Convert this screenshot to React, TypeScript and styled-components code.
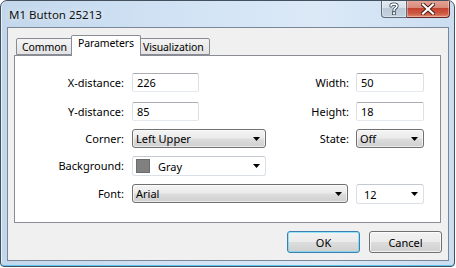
import styled, { createGlobalStyle } from 'styled-components'

const GlobalStyle = createGlobalStyle`
  html, body {
    margin: 0;
    padding: 0;
    background: #fff;
  }
  body {
    font-family: "Noto Sans", "Liberation Sans", sans-serif;
    font-size: 11px;
    color: #000;
  }
`

const Window = styled.div`
  width: 455px;
  height: 267px;
  box-sizing: border-box;
  display: flex;
  flex-direction: column;
  border: 1px solid #44505e;
  border-radius: 7px 7px 4px 4px;
  background: linear-gradient(to right, #c3d7ec 0%, #d3e4f5 45%, #dbe9f7 70%, #cbdef1 100%);
  box-shadow: inset 0 -1px 0 #5cc6ef, inset 1px 0 0 #e6f0fa;
  overflow: hidden;
`

const TitleBar = styled.div`
  height: 26px;
  flex: none;
  display: flex;
  justify-content: space-between;
  align-items: flex-start;
  padding-left: 8px;
  padding-right: 4px;
`

const Title = styled.div`
  font-size: 11.5px;
  line-height: 27px;
  color: #111;
  text-shadow: 0 0 6px rgba(255, 255, 255, 0.9);
`

const Captions = styled.div`
  display: flex;
  margin-top: -1px;
`

const CaptionButton = styled.div<{ $kind: 'help' | 'close' }>`
  height: 18px;
  width: ${(p) => (p.$kind === 'close' ? '43px' : '26px')};
  box-sizing: border-box;
  display: flex;
  align-items: center;
  justify-content: center;
  border: 1px solid ${(p) => (p.$kind === 'close' ? '#6a2620' : '#5d6b7a')};
  border-top: none;
  border-left-width: ${(p) => (p.$kind === 'close' ? '0' : '1px')};
  border-radius: ${(p) => (p.$kind === 'close' ? '0 0 4px 0' : '0 0 0 4px')};
  background: ${(p) =>
    p.$kind === 'close'
      ? 'linear-gradient(to bottom, #e5a597 0%, #d88a7b 45%, #c4432f 50%, #cf5a44 80%, #e08a6c 100%)'
      : 'linear-gradient(to bottom, #e6edf4 0%, #d6e0ea 45%, #bccad8 50%, #c5d2df 100%)'};
  box-shadow: inset 0 0 0 1px rgba(255, 255, 255, 0.35);
`

const Client = styled.div`
  flex: none;
  height: 232px;
  margin: 0 5px 0 6px;
  border: 1px solid #7b8796;
  background: #f0f0f0;
  display: flex;
  flex-direction: column;
`

const TabStrip = styled.div`
  height: 27px;
  flex: none;
  display: flex;
  align-items: flex-end;
  margin: 0 7px 0 6px;
  padding-left: 2px;
`

const Tab = styled.div<{ $active?: boolean }>`
  position: relative;
  box-sizing: border-box;
  height: ${(p) => (p.$active ? '21px' : '17px')};
  margin: ${(p) => (p.$active ? '0 -2px -1px -2px' : '0')};
  padding: ${(p) => (p.$active ? '0 6px' : '1px 5px 0')};
  z-index: ${(p) => (p.$active ? 2 : 1)};
  border: 1px solid #898c95;
  border-bottom: ${(p) => (p.$active ? 'none' : '1px solid #898c95')};
  border-radius: 2px 2px 0 0;
  background: ${(p) => (p.$active ? '#fff' : 'linear-gradient(to bottom, #f4f4f4, #e3e3e3)')};
  font-size: 10.5px;
  line-height: 15px;
  letter-spacing: -0.1px;
  white-space: nowrap;
  & + & {
    margin-left: ${(p) => (p.$active ? '-2px' : '-1px')};
  }
`

const Panel = styled.div`
  flex: none;
  height: 168px;
  box-sizing: border-box;
  margin: 0 7px 0 6px;
  border: 1px solid #898c95;
  background: #fff;
  position: relative;
  z-index: 1;
`

const Form = styled.div`
  display: grid;
  grid-template-columns: 117px 134px 90px 68px;
  grid-template-rows: 29px 27px 27px 28px 20px;
  padding-top: 17px;
  align-items: start;
`

const Label = styled.div<{ $right?: boolean }>`
  height: 19px;
  line-height: 19px;
  text-align: right;
  padding-right: ${(p) => (p.$right ? '7px' : '8px')};
  white-space: nowrap;
`

const TextBox = styled.div<{ $w: number }>`
  width: ${(p) => p.$w}px;
  height: 19px;
  box-sizing: border-box;
  border: 1px solid #dbdfe6;
  border-top-color: #abadb3;
  border-bottom-color: #e3e9ef;
  border-radius: 2px;
  background: #fff;
  padding-left: 4px;
  line-height: 17px;
`

const Combo = styled.div<{ $w: number; $flat?: boolean; $span?: boolean }>`
  width: ${(p) => p.$w}px;
  height: ${(p) => (p.$flat ? '20px' : '19px')};
  box-sizing: border-box;
  grid-column: ${(p) => (p.$span ? 'span 2' : 'auto')};
  display: flex;
  align-items: center;
  padding: 0 5px 0 3px;
  border: 1px solid ${(p) => (p.$flat ? '#dbdfe6' : '#707070')};
  border-top-color: ${(p) => (p.$flat ? '#c4c8cf' : '#707070')};
  border-radius: 3px;
  background: ${(p) =>
    p.$flat
      ? '#fff'
      : 'linear-gradient(to bottom, #f4f4f4 0%, #ebebeb 48%, #dddddd 52%, #cfcfcf 100%)'};
  box-shadow: ${(p) => (p.$flat ? 'none' : 'inset 0 0 0 1px rgba(255,255,255,0.6)')};
`

const ComboText = styled.span<{ $pad?: number }>`
  flex: 1;
  padding-left: ${(p) => p.$pad ?? 0}px;
  white-space: nowrap;
  line-height: 17px;
`

const Swatch = styled.span<{ $color: string }>`
  width: 14px;
  height: 14px;
  box-sizing: border-box;
  flex: none;
  background: ${(p) => p.$color};
  border: 1px solid #6c6c6c;
`

const ButtonRow = styled.div`
  display: flex;
  justify-content: flex-end;
  gap: 9px;
  margin: 8px 6px 0 0;
`

const Button = styled.div<{ $default?: boolean }>`
  width: 73px;
  height: 22px;
  box-sizing: border-box;
  display: flex;
  align-items: center;
  justify-content: center;
  border: 1px solid ${(p) => (p.$default ? '#3c7fb1' : '#707070')};
  border-radius: 3px;
  background: linear-gradient(to bottom, #f2f2f2 0%, #ebebeb 48%, #dddddd 52%, #cfcfcf 100%);
  box-shadow: inset 0 0 0 1px ${(p) => (p.$default ? 'rgba(72,216,251,0.55)' : 'rgba(255,255,255,0.7)')};
`

function Arrow() {
  return (
    <svg width="7" height="4" viewBox="0 0 7 4">
      <polygon points="0,0 7,0 3.5,4" fill="#000" />
    </svg>
  )
}

function HelpGlyph() {
  return (
    <svg width="10" height="13" viewBox="0 0 10 13">
      <path
        d="M2 4 C2 1.5 8 1.5 8 4 C8 6 5 6 5 8.5"
        fill="none"
        stroke="#3a4654"
        strokeWidth="3.2"
        strokeLinecap="round"
      />
      <path
        d="M2 4 C2 1.5 8 1.5 8 4 C8 6 5 6 5 8.5"
        fill="none"
        stroke="#fff"
        strokeWidth="1.6"
        strokeLinecap="round"
      />
      <rect x="3.5" y="9.8" width="3" height="3" fill="#fff" stroke="#3a4654" strokeWidth="0.8" />
    </svg>
  )
}

function CloseGlyph() {
  return (
    <svg width="14" height="12" viewBox="0 0 14 12">
      <path d="M2 1.5 L12 10.5 M12 1.5 L2 10.5" stroke="#4a1a16" strokeWidth="4" strokeLinecap="square" />
      <path d="M2 1.5 L12 10.5 M12 1.5 L2 10.5" stroke="#fff" strokeWidth="2.2" strokeLinecap="square" />
    </svg>
  )
}

export default function App() {
  return (
    <>
      <GlobalStyle />
      <Window>
        <TitleBar>
          <Title>M1 Button 25213</Title>
          <Captions>
            <CaptionButton $kind="help">
              <HelpGlyph />
            </CaptionButton>
            <CaptionButton $kind="close">
              <CloseGlyph />
            </CaptionButton>
          </Captions>
        </TitleBar>
        <Client>
          <TabStrip>
            <Tab>Common</Tab>
            <Tab $active>Parameters</Tab>
            <Tab>Visualization</Tab>
          </TabStrip>
          <Panel>
            <Form>
              <Label>X-distance:</Label>
              <TextBox $w={67}>226</TextBox>
              <Label $right>Width:</Label>
              <TextBox $w={68}>50</TextBox>

              <Label>Y-distance:</Label>
              <TextBox $w={67}>85</TextBox>
              <Label $right>Height:</Label>
              <TextBox $w={68}>18</TextBox>

              <Label>Corner:</Label>
              <Combo $w={134}>
                <ComboText>Left Upper</ComboText>
                <Arrow />
              </Combo>
              <Label $right>State:</Label>
              <Combo $w={68}>
                <ComboText>Off</ComboText>
                <Arrow />
              </Combo>

              <Label>Background:</Label>
              <Combo $w={134} $flat>
                <Swatch $color="#808080" />
                <ComboText $pad={8}>Gray</ComboText>
                <Arrow />
              </Combo>
              <div />
              <div />

              <Label>Font:</Label>
              <Combo $w={216} $span>
                <ComboText>Arial</ComboText>
                <Arrow />
              </Combo>
              <Combo $w={68} $flat>
                <ComboText $pad={4}>12</ComboText>
                <Arrow />
              </Combo>
            </Form>
          </Panel>
          <ButtonRow>
            <Button $default>OK</Button>
            <Button>Cancel</Button>
          </ButtonRow>
        </Client>
      </Window>
    </>
  )
}
